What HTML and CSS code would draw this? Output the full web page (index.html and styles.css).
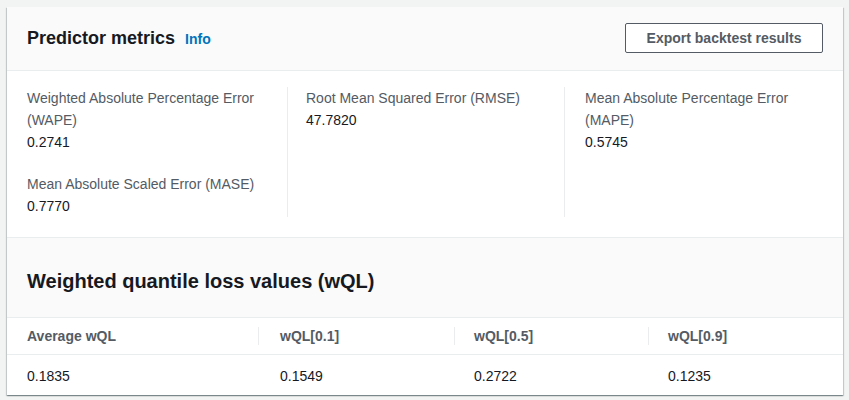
FILE: index.html
```html
<!DOCTYPE html>
<html lang="en">
<head>
<meta charset="utf-8">
<title>Predictor metrics</title>
<link rel="stylesheet" href="styles.css">
</head>
<body>
<div class="card">
  <div class="card-header">
    <div class="title-wrap">
      <h2 class="title">Predictor metrics</h2>
      <a class="info" href="#">Info</a>
    </div>
    <button class="btn" type="button">Export backtest results</button>
  </div>
  <div class="metrics">
    <div class="col col-first">
      <div class="metric">
        <div class="label">Weighted Absolute Percentage Error (WAPE)</div>
        <div class="value">0.2741</div>
      </div>
      <div class="metric">
        <div class="label">Mean Absolute Scaled Error (MASE)</div>
        <div class="value">0.7770</div>
      </div>
    </div>
    <div class="col col-mid">
      <div class="metric">
        <div class="label">Root Mean Squared Error (RMSE)</div>
        <div class="value">47.7820</div>
      </div>
    </div>
    <div class="col col-last">
      <div class="metric">
        <div class="label">Mean Absolute Percentage Error (MAPE)</div>
        <div class="value">0.5745</div>
      </div>
    </div>
  </div>
  <div class="wql-header">
    <h2 class="wql-title">Weighted quantile loss values (wQL)</h2>
  </div>
  <div class="table">
    <div class="row head">
      <div class="cell">Average wQL</div>
      <div class="cell sep">wQL[0.1]</div>
      <div class="cell sep">wQL[0.5]</div>
      <div class="cell sep">wQL[0.9]</div>
    </div>
    <div class="row data">
      <div class="cell">0.1835</div>
      <div class="cell">0.1549</div>
      <div class="cell">0.2722</div>
      <div class="cell">0.1235</div>
    </div>
  </div>
</div>
</body>
</html>
```

FILE: styles.css
```css
* { box-sizing: border-box; }
html, body { margin: 0; padding: 0; }
body {
  background: #f2f3f3;
  padding: 7px 6px 5px 7px;
  font-family: "Liberation Sans", Arial, sans-serif;
  font-size: 14px;
  line-height: 22px;
  color: #16191f;
}
.card {
  width: 836px;
  height: 388px;
  background: #fff;
  box-shadow: 0 1px 1px 0 rgba(0,28,36,0.3), 1px 1px 1px 0 rgba(0,28,36,0.15), -1px 1px 1px 0 rgba(0,28,36,0.15);
  overflow: hidden;
}
.card-header {
  height: 64px;
  background: #fafafa;
  border-bottom: 1px solid #eaeded;
  padding: 16px 20px 17px 20px;
  display: flex;
  align-items: center;
  justify-content: space-between;
}
.title-wrap { display: flex; align-items: baseline; gap: 10px; }
.title {
  margin: 0;
  font-size: 18px;
  line-height: 22px;
  font-weight: 700;
  color: #16191f;
}
.info {
  color: #0073bb;
  font-weight: 700;
  font-size: 14px;
  text-decoration: none;
}
.btn {
  width: 198px;
  height: 30px;
  background: #fff;
  border: 1px solid #545b64;
  border-radius: 2px;
  color: #545b64;
  font-family: "Liberation Sans", Arial, sans-serif;
  font-size: 14px;
  font-weight: 700;
  padding: 0;
}
.metrics {
  display: grid;
  grid-template-columns: 260px 277px 1fr;
  padding: 16px 20px 20px 20px;
  border-bottom: 1px solid #eaeded;
  height: 167px;
}
.col { display: flex; flex-direction: column; gap: 20px; }
.col-mid { border-left: 1px solid #eaeded; padding-left: 18px; }
.col-last { border-left: 1px solid #eaeded; padding-left: 20px; padding-right: 20px; }
.label { color: #545b64; }
.value { color: #16191f; }
.wql-header {
  background: #fafafa;
  height: 80px;
  padding: 31px 20px 0 20px;
  border-bottom: 1px solid #eaeded;
}
.wql-title {
  margin: 0;
  font-size: 20px;
  line-height: 24px;
  font-weight: 700;
  color: #16191f;
}
.row {
  display: grid;
  grid-template-columns: 251px 196px 194px 1fr;
}
.head {
  height: 37px;
  border-bottom: 1px solid #eaeded;
  align-items: center;
  font-weight: 700;
  color: #545b64;
}
.data { padding-top: 10px; }
.cell { padding-left: 20px; position: relative; }
.row .cell:first-child { padding-left: 20px; }
.row .cell:nth-child(2) { padding-left: 22px; }
.sep::before {
  content: "";
  position: absolute;
  left: 0;
  top: 50%;
  height: 18px;
  margin-top: -9px;
  border-left: 1px solid #eaeded;
}
```
